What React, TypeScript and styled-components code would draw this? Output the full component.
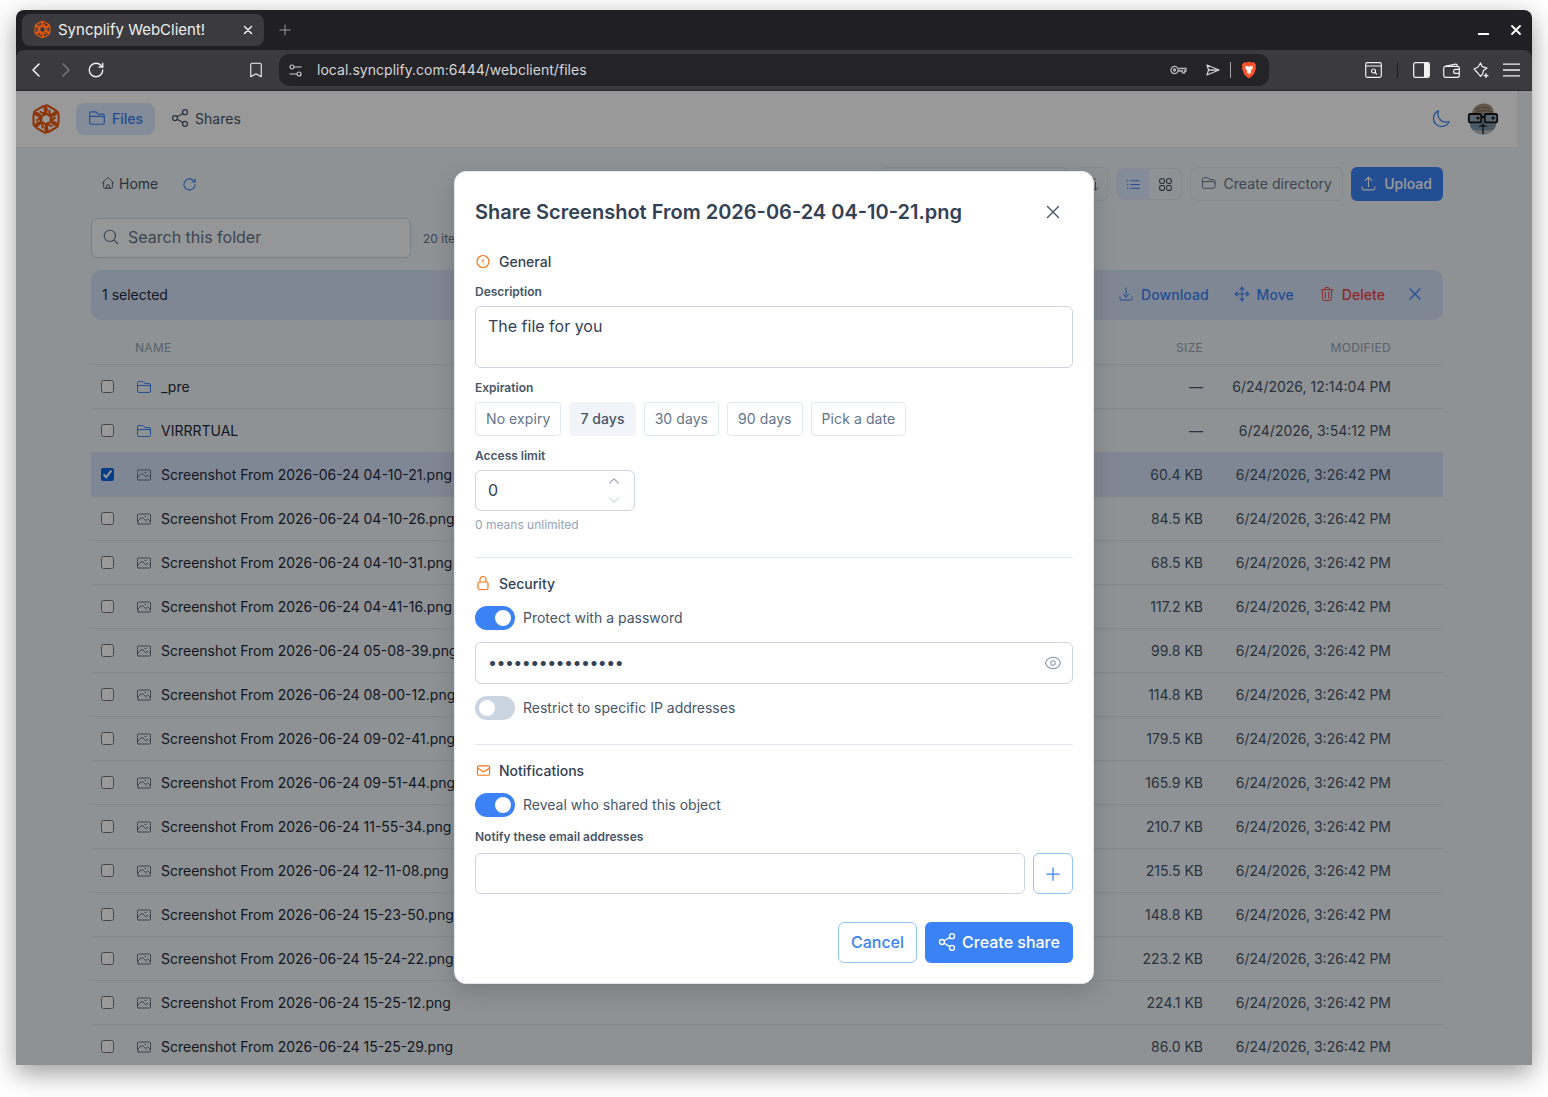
import React from 'react';
import styled, { createGlobalStyle } from 'styled-components';
import {
  HiOutlineArrowDownTray,
  HiOutlineArrowUpTray,
  HiOutlineBarsArrowDown,
  HiOutlineEnvelope,
  HiOutlineExclamationCircle,
  HiOutlineEye,
  HiOutlineFolder,
  HiOutlineHome,
  HiOutlineListBullet,
  HiOutlineLockClosed,
  HiOutlineMagnifyingGlass,
  HiOutlineMoon,
  HiOutlinePhoto,
  HiOutlinePlus,
  HiOutlineSquares2X2,
  HiOutlineTrash,
  HiOutlineXMark,
  HiOutlineChevronUp,
  HiOutlineChevronDown,
} from 'react-icons/hi2';
import { Bookmark, ChevronLeft, ChevronRight, Move, RotateCw, Share2 } from 'lucide-react';

const GlobalStyle = createGlobalStyle`
  html, body {
    margin: 0;
    padding: 0;
    height: 1097px;
    overflow: hidden;
    background: #fff;
  }
  * { box-sizing: border-box; }
  body { font-family: Inter, "Liberation Sans", sans-serif; }
`;

const Desktop = styled.div`
  padding: 10px 16px 0;
  height: 1097px;
`;

const Win = styled.div`
  position: relative;
  height: 1055px;
  overflow: hidden;
  border-radius: 8px 8px 0 0;
  display: flex;
  flex-direction: column;
  background: #1f1f24;
`;

const WinShadow = styled.div`
  border-radius: 8px 8px 0 0;
  box-shadow: 0 8px 26px rgba(0, 0, 0, 0.4);
`;

const TabBar = styled.div`
  height: 40px;
  flex: none;
  display: flex;
  align-items: flex-start;
  padding: 4px 0 0 6px;
`;

const Tab = styled.div`
  width: 242px;
  height: 32px;
  background: #3a3a3f;
  border-radius: 8px;
  display: flex;
  align-items: center;
  padding: 0 9px 1px 11px;
  gap: 6px;
  color: #efefef;
  font-size: 15px;
`;

const TabTitle = styled.span`
  flex: 1;
`;

const NewTab = styled.div`
  width: 20px;
  height: 32px;
  margin-left: 11px;
  display: flex;
  align-items: center;
  justify-content: center;
  color: #9a9a9e;
`;

const WinControls = styled.div`
  margin-left: auto;
  height: 32px;
  display: flex;
  align-items: center;
  gap: 19px;
  padding-right: 8px;
  color: #fff;
`;

const Minimize = styled.div`
  width: 11px;
  height: 2px;
  background: #fff;
  margin-top: 8px;
`;

const Chrome = styled.div`
  height: 41px;
  flex: none;
  background: #3a3a3f;
  border-radius: 8px 8px 0 0;
  border-bottom: 1px solid #29292d;
  display: flex;
  align-items: center;
  padding-left: 5px;
`;

const Cell = styled.div<{ $dim?: boolean; $w?: number }>`
  width: ${(p) => p.$w ?? 30}px;
  height: 30px;
  flex: none;
  display: flex;
  align-items: center;
  justify-content: center;
  color: ${(p) => (p.$dim ? '#77777b' : '#f1f1f1')};
`;

const BookmarkCell = styled(Cell)`
  margin-left: 130px;
  margin-right: 8px;
`;

const SendCell = styled(Cell)`
  padding-left: 9px;
`;

const UrlBar = styled.div`
  width: 990px;
  height: 32px;
  flex: none;
  background: #242428;
  border-radius: 10px;
  display: flex;
  align-items: center;
  padding: 0 2px 0 10px;
  color: #d6d6d8;
  font-size: 14px;
`;

const UrlText = styled.span`
  margin-left: 15px;
  margin-bottom: 2px;
  flex: 1;
  letter-spacing: 0.03px;
`;

const ThinSep = styled.div<{ $h?: number; $c?: string }>`
  width: 1px;
  height: ${(p) => p.$h ?? 16}px;
  background: ${(p) => p.$c ?? '#a5a5a8'};
  flex: none;
`;

const RightTools = styled.div`
  margin-left: 89px;
  display: flex;
  align-items: center;
`;

const AppArea = styled.div`
  flex: 1;
  min-height: 0;
  background: #edf3f7;
  position: relative;
`;

const PageCol = styled.div`
  width: 1501px;
`;

const Header = styled.header`
  height: 57px;
  background: #fff;
  border-bottom: 1px solid #e8ecef;
  display: flex;
  align-items: center;
  padding: 0 18px 0 14px;
`;

const Nav = styled.nav`
  display: flex;
  align-items: center;
  margin-left: 14px;
  gap: 4px;
`;

const NavItem = styled.div<{ $active?: boolean }>`
  height: 32px;
  padding: 0 12px 2px;
  border-radius: 8px;
  display: flex;
  align-items: center;
  gap: 6px;
  font-size: 14px;
  font-weight: ${(p) => (p.$active ? 500 : 400)};
  color: ${(p) => (p.$active ? '#3b82f6' : '#475569')};
  background: ${(p) => (p.$active ? '#dbeafe' : 'transparent')};
`;

const ShareGlyph = styled(Share2)`
  margin: 0 -1px;
`;

const HeaderRight = styled.div`
  margin-left: auto;
  display: flex;
  align-items: center;
  gap: 16px;
  color: #3b82f6;
`;

const Content = styled.main`
  padding: 19px 74px 0 75px;
`;

const Toolbar = styled.div`
  display: flex;
  align-items: center;
  height: 34px;
`;

const Crumb = styled.div`
  display: flex;
  align-items: center;
  gap: 4px;
  margin-left: 10px;
  padding-bottom: 2px;
  font-size: 14px;
  color: #475569;
`;

const RefreshBtn = styled.div`
  margin-left: 24px;
  display: flex;
  color: #3b82f6;
`;

const ToolRight = styled.div`
  margin-left: auto;
  display: flex;
  align-items: center;
  gap: 8px;
`;

const SortSelect = styled.div`
  width: 190px;
  height: 34px;
  border: 1px solid #e2e8f0;
  border-radius: 6px;
`;

const SortBtn = styled.div`
  height: 34px;
  width: 32px;
  border: 1px solid #e2e8f0;
  border-radius: 6px;
  display: flex;
  align-items: center;
  justify-content: center;
  color: #64748b;
`;

const CreateDirBtn = styled.div`
  height: 34px;
  width: 153px;
  padding: 0 10px 2px;
  border: 1px solid #e2e8f0;
  border-radius: 6px;
  display: flex;
  align-items: center;
  gap: 7px;
  font-size: 14px;
  letter-spacing: 0.08px;
  white-space: nowrap;
  color: #64748b;
`;

const ViewToggle = styled.div`
  width: 66px;
  height: 32px;
  border: 1px solid #e2e8f0;
  border-radius: 8px;
  overflow: hidden;
  display: flex;
`;

const ViewOption = styled.div<{ $on?: boolean }>`
  flex: 1;
  display: flex;
  align-items: center;
  justify-content: center;
  background: ${(p) => (p.$on ? '#dbeafe' : 'transparent')};
  color: ${(p) => (p.$on ? '#3b82f6' : '#334155')};
`;

const PrimarySmall = styled.div`
  width: 92px;
  height: 34px;
  background: #3b82f6;
  border-radius: 6px;
  display: flex;
  align-items: center;
  justify-content: center;
  gap: 7px;
  padding: 0 2px 2px 0;
  font-size: 14px;
  font-weight: 500;
  color: #fff;
`;

const SearchRow = styled.div`
  display: flex;
  align-items: center;
  gap: 12px;
  margin-top: 17px;
`;

const SearchBox = styled.div`
  width: 320px;
  height: 40px;
  background: #f8fafc;
  border: 1px solid #cbd5e1;
  border-radius: 6px;
  display: flex;
  align-items: center;
  gap: 8px;
  padding: 0 10px 2px;
  font-size: 16px;
  color: #64748b;
`;

const ItemCount = styled.span`
  font-size: 12px;
  color: #64748b;
`;

const SelectionBar = styled.div`
  height: 50px;
  margin-top: 12px;
  background: #d5e1f7;
  border-radius: 10px;
  display: flex;
  align-items: center;
  padding: 0 18px 2px 11px;
  font-size: 14px;
  color: #1e293b;
`;

const BarActions = styled.div`
  margin-left: auto;
  display: flex;
  align-items: center;
  gap: 25px;
`;

const BarAction = styled.div<{ $danger?: boolean }>`
  display: flex;
  align-items: center;
  gap: 7px;
  font-size: 14px;
  font-weight: 500;
  letter-spacing: 0.05px;
  color: ${(p) => (p.$danger ? '#ef4444' : '#3b82f6')};
`;

const BarClose = styled.div`
  display: flex;
  margin-left: -5px;
  color: #3b82f6;
`;

const TableHead = styled.div`
  margin-top: 16px;
  height: 29px;
  display: flex;
  align-items: center;
  padding: 0 52px 6px 44px;
  border-bottom: 1px solid #dde3e8;
  font-size: 12px;
  letter-spacing: 0.3px;
  color: #94a3b8;
`;

const HeadName = styled.span`
  flex: 1;
`;

const HeadSize = styled.span`
  width: 80px;
  text-align: right;
`;

const HeadDate = styled.span`
  width: 188px;
  text-align: right;
`;

const Row = styled.div<{ $sel?: boolean }>`
  height: 44px;
  display: flex;
  align-items: center;
  padding: 0 52px 0 10px;
  border-bottom: 1px solid #dde3e8;
  font-size: 14px;
  color: #1e293b;
  background: ${(p) => (p.$sel ? '#d5e1f7' : 'transparent')};
`;

const Check = styled.input`
  width: 13px;
  height: 13px;
  margin: 0 22px 0 0;
  flex: none;
  accent-color: #0b66e4;
`;

const RowIcon = styled.span<{ $folder?: boolean }>`
  display: flex;
  width: 16px;
  margin-right: 9px;
  flex: none;
  color: ${(p) => (p.$folder ? '#3b82f6' : '#64748b')};
`;

const RowName = styled.span`
  flex: 1;
  white-space: nowrap;
`;

const RowSize = styled.span`
  width: 80px;
  text-align: right;
  color: #475569;
`;

const RowDate = styled.span`
  width: 188px;
  text-align: right;
  color: #475569;
`;

const Overlay = styled.div`
  position: absolute;
  inset: 0;
  background: rgba(0, 0, 0, 0.4);
  display: flex;
  align-items: center;
  justify-content: center;
`;

const Modal = styled.div`
  width: 640px;
  height: 813px;
  margin-bottom: 1px;
  background: #fff;
  border: 1px solid #e2e8f0;
  border-radius: 12px;
  box-shadow: 0 8px 24px rgba(0, 0, 0, 0.16);
  padding: 26px 20px 0;
  color: #334155;
`;

const ModalHead = styled.div`
  height: 28px;
  display: flex;
  align-items: center;
  justify-content: space-between;
  padding-right: 9px;
`;

const ModalTitle = styled.h2`
  margin: 0;
  font-size: 20px;
  line-height: 28px;
  font-weight: 600;
  color: #334155;
`;

const CloseBtn = styled.div`
  display: flex;
  color: #475569;
`;

const SectionHead = styled.div<{ $top: number }>`
  margin-top: ${(p) => p.$top}px;
  height: 20px;
  padding-bottom: 2px;
  display: flex;
  align-items: center;
  gap: 8px;
  font-size: 14px;
  font-weight: 500;
  color: #334155;
`;

const SectionIcon = styled.span`
  display: flex;
  justify-content: center;
  width: 16px;
  color: #f97316;
`;

const FieldLabel = styled.label<{ $top: number }>`
  display: block;
  margin-top: ${(p) => p.$top}px;
  height: 16px;
  line-height: 14px;
  font-size: 12px;
  font-weight: 600;
  color: #475569;
`;

const DescArea = styled.textarea`
  display: block;
  width: 100%;
  height: 62px;
  margin-top: 5px;
  padding: 8px 12px;
  resize: none;
  outline: none;
  border: 1px solid #cbd5e1;
  border-radius: 6px;
  font: 400 16px/22px Inter, sans-serif;
  color: #334155;
`;

const Chips = styled.div`
  display: flex;
  gap: 8px;
  margin-top: 5px;
`;

const Chip = styled.div<{ $on?: boolean }>`
  height: 34px;
  padding: 0 10px 2px;
  display: flex;
  align-items: center;
  border-radius: 4px;
  border: 1px solid ${(p) => (p.$on ? '#f1f5f9' : '#e2e8f0')};
  background: ${(p) => (p.$on ? '#f1f5f9' : '#fff')};
  font-size: 14px;
  letter-spacing: 0.08px;
  font-weight: ${(p) => (p.$on ? 500 : 400)};
  color: ${(p) => (p.$on ? '#475569' : '#64748b')};
`;

const NumberField = styled.div`
  width: 160px;
  height: 41px;
  margin-top: 5px;
  border: 1px solid #cbd5e1;
  border-radius: 6px;
  display: flex;
  align-items: center;
  padding: 0 13px 2px 12px;
  font-size: 16px;
  color: #334155;
`;

const Spin = styled.div`
  margin: 2px 0 0 auto;
  display: flex;
  flex-direction: column;
  gap: 5px;
`;

const SpinArrow = styled.span<{ $faint?: boolean }>`
  display: flex;
  color: ${(p) => (p.$faint ? '#cbd5e1' : '#94a3b8')};
`;

const Hint = styled.div`
  margin-top: 7px;
  height: 16px;
  line-height: 14px;
  font-size: 12px;
  color: #94a3b8;
`;

const Divider = styled.hr<{ $top: number }>`
  margin: ${(p) => p.$top}px 0 0;
  height: 1px;
  border: 0;
  background: #e2e8f0;
`;

const SwitchRow = styled.div<{ $top: number }>`
  margin-top: ${(p) => p.$top}px;
  display: flex;
  align-items: center;
  gap: 8px;
  font-size: 14px;
  color: #475569;
`;

const SwitchLabel = styled.span`
  padding-bottom: 2px;
`;

const SwitchTrack = styled.div<{ $on?: boolean }>`
  width: 40px;
  height: 24px;
  border-radius: 12px;
  padding: 4px;
  display: flex;
  justify-content: ${(p) => (p.$on ? 'flex-end' : 'flex-start')};
  background: ${(p) => (p.$on ? '#3b82f6' : '#cbd5e1')};
`;

const SwitchKnob = styled.div`
  width: 16px;
  height: 16px;
  border-radius: 50%;
  background: #fff;
`;

const PasswordField = styled.div`
  height: 42px;
  margin-top: 12px;
  border: 1px solid #cbd5e1;
  border-radius: 6px;
  display: flex;
  align-items: center;
  padding: 0 10px 0 12px;
  color: #94a3b8;
`;

const BareInput = styled.input`
  flex: 1;
  min-width: 0;
  border: 0;
  outline: none;
  padding: 0 0 2px;
  background: transparent;
  font: 400 16px Inter, sans-serif;
  letter-spacing: -0.55px;
  color: #334155;
`;

const EmailRow = styled.div`
  display: flex;
  gap: 8px;
  margin-top: 7px;
`;

const EmailInput = styled.input`
  flex: 1;
  min-width: 0;
  height: 41px;
  border: 1px solid #cbd5e1;
  border-radius: 6px;
  outline: none;
`;

const AddBtn = styled.div`
  width: 40px;
  height: 41px;
  border: 1px solid #93c5fd;
  border-radius: 6px;
  display: flex;
  align-items: center;
  justify-content: center;
  color: #3b82f6;
`;

const Footer = styled.div`
  margin-top: 28px;
  display: flex;
  justify-content: flex-end;
  gap: 8px;
`;

const CancelBtn = styled.div`
  height: 41px;
  width: 79px;
  padding-bottom: 2px;
  border: 1px solid #93c5fd;
  border-radius: 6px;
  display: flex;
  align-items: center;
  justify-content: center;
  font-size: 16px;
  font-weight: 500;
  color: #3b82f6;
`;

const CreateBtn = styled.div`
  height: 41px;
  width: 148px;
  padding-bottom: 2px;
  background: #3b82f6;
  border-radius: 6px;
  display: flex;
  align-items: center;
  justify-content: center;
  gap: 6px;
  font-size: 16px;
  font-weight: 500;
  color: #fff;
`;

const Logo = ({ size, color = '#ea580c' }: { size: number; color?: string }) => (
  <svg width={size} height={size} viewBox="-15 -15 30 30" fill="none" stroke={color} strokeWidth="2" strokeLinejoin="round" strokeLinecap="round">
    {[0, 60, 120, 180, 240, 300].map((a) => (
      <path key={a} transform={`rotate(${a})`} d="M3.2 -3 C0 -5 -1.8 -8.4 -1.2 -12 Q0 -13.4 1.6 -12.6 L8.6 -8.6 Q10.3 -7.6 9.8 -6 C8.8 -3.6 6.8 -2.8 5 -3.6 C3.6 -4.4 3 -6 3.2 -7.8" />
    ))}
  </svg>
);

const Brave = () => (
  <svg width="16" height="18" viewBox="0 0 18 20">
    <path d="M3.6 1.2 L6.2 1.6 L9 .6 L11.8 1.6 L14.4 1.2 L17 4 L16.3 6 L16.8 8.2 L14.6 14.6 C13.4 16.6 10.6 18.6 9 19.6 C7.4 18.6 4.6 16.6 3.4 14.6 L1.2 8.2 L1.7 6 L1 4 Z" fill="#fb542b" />
    <path d="M4.5 6 L7 5.4 L9 6.3 L11 5.4 L13.5 6 L12.8 8.6 L11 10.8 L11.6 12.6 L9 15 L6.4 12.6 L7 10.8 L5.2 8.6 Z" fill="#fff" />
    <path d="M7.8 13 L10.2 13 L9 14.2 Z" fill="#fb542b" />
  </svg>
);

const TuneIcon = () => (
  <svg width="13" height="13" viewBox="0 0 13 13" fill="none" stroke="#cfcfd2" strokeWidth="1.2" style={{ flex: 'none' }}>
    <circle cx="3" cy="3" r="2" />
    <path d="M5.4 3H12.5M.5 10H7.6" />
    <circle cx="10" cy="10" r="2" />
  </svg>
);

const KeyIcon = () => (
  <svg width="17" height="12" viewBox="0 0 17 12" fill="none" stroke="#b9b9bc" strokeWidth="1.3">
    <circle cx="4.5" cy="6" r="3.6" />
    <circle cx="4.5" cy="6" r="1" />
    <path d="M8.2 4.5H16V7H14.6V8.8H12.4V7H8.2" />
  </svg>
);

const SendIcon = () => (
  <svg width="14" height="12" viewBox="0 0 14 12" fill="none" stroke="#d0d0d3" strokeWidth="1.3" strokeLinejoin="round">
    <path d="M1 1L13 6L1 11L2.6 6Z" />
    <path d="M2.6 6H13" />
  </svg>
);

const TabSearchIcon = () => (
  <svg width="17" height="16" viewBox="0 0 17 16" fill="none" stroke="#f1f1f1" strokeWidth="1.2">
    <rect x=".7" y=".7" width="15.6" height="14.6" rx="1.5" />
    <path d="M.7 4H16.3" />
    <circle cx="8.5" cy="9" r="2" />
    <path d="M10 10.5L12 12.4" />
  </svg>
);

const SidebarIcon = () => (
  <svg width="17" height="16" viewBox="0 0 17 16">
    <rect x=".7" y=".7" width="15.6" height="14.6" rx="1.5" fill="none" stroke="#f1f1f1" strokeWidth="1.3" />
    <rect x="11" y="1" width="5" height="14" fill="#f1f1f1" />
  </svg>
);

const WalletIcon = () => (
  <svg width="17" height="15" viewBox="0 0 17 15" fill="none" stroke="#f1f1f1" strokeWidth="1.2">
    <path d="M2 3.4L12.5 1.2C13.6 1 14.2 1.6 14.2 2.6V3.4" />
    <rect x=".7" y="3.4" width="15.6" height="10.9" rx="2" />
    <path d="M16.3 6.4H12.6C11.4 6.4 10.6 7.3 10.6 8.4C10.6 9.5 11.4 10.4 12.6 10.4H16.3" />
  </svg>
);

const SparkleIcon = () => (
  <svg width="17" height="17" viewBox="0 0 17 17" fill="none" stroke="#f1f1f1" strokeWidth="1.2" strokeLinejoin="round">
    <path d="M7.5 1L9.2 4.6L14 6L10.4 8.6L9.6 12L7.5 14.4L4.8 11L1 7L5 5Z" />
    <path d="M13 11.2V16M10.6 13.6H15.4" strokeWidth="1.4" />
  </svg>
);

const MenuIcon = () => (
  <svg width="17" height="14" viewBox="0 0 17 14" stroke="#f1f1f1" strokeWidth="1.3">
    <path d="M0 1.2H17M0 7H17M0 12.8H17" />
  </svg>
);

const Avatar = () => (
  <svg width="32" height="32" viewBox="0 0 32 32">
    <ellipse cx="16" cy="19" rx="13.5" ry="12.5" fill="#7d95a8" />
    <path d="M16 31C11 31 7 29 4.5 26C9 28 23 28 27.5 26C25 29 21 31 16 31Z" fill="#b9c0c4" />
    <path d="M5.5 12C4 6 10 .5 17 .5C24 .5 28 6 26.5 12C20 9 12 9 5.5 12Z" fill="#a3937c" />
    <path d="M9 7C12 4 18 3 23 6M8 10C13 7 19 7 25 9" stroke="#6c6154" strokeWidth="1" fill="none" />
    <rect x="1.8" y="11" width="12.4" height="8.4" rx="1.6" fill="#93a9b8" stroke="#141414" strokeWidth="1.8" />
    <rect x="17.8" y="11" width="12.4" height="8.4" rx="1.6" fill="#93a9b8" stroke="#141414" strokeWidth="1.8" />
    <path d="M14 14H18" stroke="#141414" strokeWidth="1.8" />
    <circle cx="11" cy="15" r="1.5" fill="#141414" />
    <circle cx="26" cy="15" r="1.5" fill="#141414" />
    <path d="M16 20V31M12 23.5C14 22.6 18 22.6 20 23.5" stroke="#141414" strokeWidth="1.2" fill="none" />
  </svg>
);

const dirs = [
  { name: '_pre', modified: '6/24/2026, 12:14:04 PM' },
  { name: 'VIRRRTUAL', modified: '6/24/2026, 3:54:12 PM' },
];

const shots: [string, string][] = [
  ['04-10-21', '60.4 KB'],
  ['04-10-26', '84.5 KB'],
  ['04-10-31', '68.5 KB'],
  ['04-41-16', '117.2 KB'],
  ['05-08-39', '99.8 KB'],
  ['08-00-12', '114.8 KB'],
  ['09-02-41', '179.5 KB'],
  ['09-51-44', '165.9 KB'],
  ['11-55-34', '210.7 KB'],
  ['12-11-08', '215.5 KB'],
  ['15-23-50', '148.8 KB'],
  ['15-24-22', '223.2 KB'],
  ['15-25-12', '224.1 KB'],
  ['15-25-29', '86.0 KB'],
];

const chips = ['No expiry', '7 days', '30 days', '90 days', 'Pick a date'];

const Switch = ({ on }: { on?: boolean }) => (
  <SwitchTrack $on={on}>
    <SwitchKnob />
  </SwitchTrack>
);

export default function App() {
  return (
    <>
      <GlobalStyle />
      <Desktop>
        <WinShadow>
          <Win>
            <TabBar>
              <Tab>
                <Logo size={19} />
                <TabTitle>Syncplify WebClient!</TabTitle>
                <HiOutlineXMark size={14} strokeWidth={2.6} />
              </Tab>
              <NewTab>
                <HiOutlinePlus size={16} />
              </NewTab>
              <WinControls>
                <Minimize />
                <HiOutlineXMark size={16} strokeWidth={2.8} />
              </WinControls>
            </TabBar>
            <Chrome>
              <Cell><ChevronLeft size={24} strokeWidth={1.6} /></Cell>
              <Cell $dim><ChevronRight size={24} strokeWidth={1.6} /></Cell>
              <Cell><RotateCw size={18} strokeWidth={1.8} /></Cell>
              <BookmarkCell><Bookmark size={18} strokeWidth={1.5} /></BookmarkCell>
              <UrlBar>
                <TuneIcon />
                <UrlText>local.syncplify.com:6444/webclient/files</UrlText>
                <KeyIcon />
                <SendCell $w={43}><SendIcon /></SendCell>
                <ThinSep />
                <Cell $w={36}><Brave /></Cell>
              </UrlBar>
              <RightTools>
                <Cell><TabSearchIcon /></Cell>
                <Cell $w={18}><ThinSep $h={16} $c="#202024" /></Cell>
                <Cell><SidebarIcon /></Cell>
                <Cell><WalletIcon /></Cell>
                <Cell><SparkleIcon /></Cell>
                <Cell><MenuIcon /></Cell>
              </RightTools>
            </Chrome>
            <AppArea>
              <PageCol>
                <Header>
                  <Logo size={32} />
                  <Nav>
                    <NavItem $active>
                      <HiOutlineFolder size={18} />
                      Files
                    </NavItem>
                    <NavItem>
                      <ShareGlyph size={20} strokeWidth={1.5} />
                      Shares
                    </NavItem>
                  </Nav>
                  <HeaderRight>
                    <HiOutlineMoon size={20} />
                    <Avatar />
                  </HeaderRight>
                </Header>
                <Content>
                  <Toolbar>
                    <Crumb>
                      <HiOutlineHome size={14} />
                      Home
                    </Crumb>
                    <RefreshBtn><RotateCw size={15} strokeWidth={1.7} /></RefreshBtn>
                    <ToolRight>
                      <SortSelect />
                      <SortBtn><HiOutlineBarsArrowDown size={16} /></SortBtn>
                      <ViewToggle>
                        <ViewOption $on><HiOutlineListBullet size={17} /></ViewOption>
                        <ViewOption><HiOutlineSquares2X2 size={17} /></ViewOption>
                      </ViewToggle>
                      <CreateDirBtn>
                        <HiOutlineFolder size={16} />
                        Create directory
                      </CreateDirBtn>
                      <PrimarySmall>
                        <HiOutlineArrowUpTray size={17} />
                        Upload
                      </PrimarySmall>
                    </ToolRight>
                  </Toolbar>
                  <SearchRow>
                    <SearchBox>
                      <HiOutlineMagnifyingGlass size={18} />
                      Search this folder
                    </SearchBox>
                    <ItemCount>20 items</ItemCount>
                  </SearchRow>
                  <SelectionBar>
                    1 selected
                    <BarActions>
                      <BarAction>
                        <HiOutlineArrowDownTray size={16} />
                        Download
                      </BarAction>
                      <BarAction>
                        <Move size={16} strokeWidth={1.7} />
                        Move
                      </BarAction>
                      <BarAction $danger>
                        <HiOutlineTrash size={16} />
                        Delete
                      </BarAction>
                      <BarClose><HiOutlineXMark size={20} /></BarClose>
                    </BarActions>
                  </SelectionBar>
                  <TableHead>
                    <HeadName>NAME</HeadName>
                    <HeadSize>SIZE</HeadSize>
                    <HeadDate>MODIFIED</HeadDate>
                  </TableHead>
                  {dirs.map((d) => (
                    <Row key={d.name}>
                      <Check type="checkbox" readOnly />
                      <RowIcon $folder><HiOutlineFolder size={16} /></RowIcon>
                      <RowName>{d.name}</RowName>
                      <RowSize>—</RowSize>
                      <RowDate>{d.modified}</RowDate>
                    </Row>
                  ))}
                  {shots.map(([stamp, size], i) => (
                    <Row key={stamp} $sel={i === 0}>
                      <Check type="checkbox" readOnly checked={i === 0} />
                      <RowIcon><HiOutlinePhoto size={16} /></RowIcon>
                      <RowName>Screenshot From 2026-06-24 {stamp}.png</RowName>
                      <RowSize>{size}</RowSize>
                      <RowDate>6/24/2026, 3:26:42 PM</RowDate>
                    </Row>
                  ))}
                </Content>
              </PageCol>
              <Overlay>
                <Modal>
                  <ModalHead>
                    <ModalTitle>Share Screenshot From 2026-06-24 04-10-21.png</ModalTitle>
                    <CloseBtn><HiOutlineXMark size={22} /></CloseBtn>
                  </ModalHead>
                  <SectionHead $top={26}>
                    <SectionIcon><HiOutlineExclamationCircle size={17} strokeWidth={1.8} /></SectionIcon>
                    General
                  </SectionHead>
                  <FieldLabel $top={13}>Description</FieldLabel>
                  <DescArea readOnly defaultValue="The file for you" />
                  <FieldLabel $top={13}>Expiration</FieldLabel>
                  <Chips>
                    {chips.map((c) => (
                      <Chip key={c} $on={c === '7 days'}>{c}</Chip>
                    ))}
                  </Chips>
                  <FieldLabel $top={13}>Access limit</FieldLabel>
                  <NumberField>
                    0
                    <Spin>
                      <SpinArrow><HiOutlineChevronUp size={14} strokeWidth={2} /></SpinArrow>
                      <SpinArrow $faint><HiOutlineChevronDown size={14} strokeWidth={2} /></SpinArrow>
                    </Spin>
                  </NumberField>
                  <Hint>0 means unlimited</Hint>
                  <Divider $top={23} />
                  <SectionHead $top={16}>
                    <SectionIcon><HiOutlineLockClosed size={16} strokeWidth={1.8} /></SectionIcon>
                    Security
                  </SectionHead>
                  <SwitchRow $top={12}>
                    <Switch on />
                    <SwitchLabel>Protect with a password</SwitchLabel>
                  </SwitchRow>
                  <PasswordField>
                    <BareInput type="password" readOnly defaultValue="aaaaaaaaaaaaaaaa" />
                    <HiOutlineEye size={18} />
                  </PasswordField>
                  <SwitchRow $top={12}>
                    <Switch />
                    <SwitchLabel>Restrict to specific IP addresses</SwitchLabel>
                  </SwitchRow>
                  <Divider $top={24} />
                  <SectionHead $top={16}>
                    <SectionIcon><HiOutlineEnvelope size={15} strokeWidth={1.8} /></SectionIcon>
                    Notifications
                  </SectionHead>
                  <SwitchRow $top={12}>
                    <Switch on />
                    <SwitchLabel>Reveal who shared this object</SwitchLabel>
                  </SwitchRow>
                  <FieldLabel $top={13}>Notify these email addresses</FieldLabel>
                  <EmailRow>
                    <EmailInput readOnly />
                    <AddBtn><HiOutlinePlus size={20} /></AddBtn>
                  </EmailRow>
                  <Footer>
                    <CancelBtn>Cancel</CancelBtn>
                    <CreateBtn>
                      <ShareGlyph size={20} strokeWidth={1.6} />
                      Create share
                    </CreateBtn>
                  </Footer>
                </Modal>
              </Overlay>
            </AppArea>
          </Win>
        </WinShadow>
      </Desktop>
    </>
  );
}
